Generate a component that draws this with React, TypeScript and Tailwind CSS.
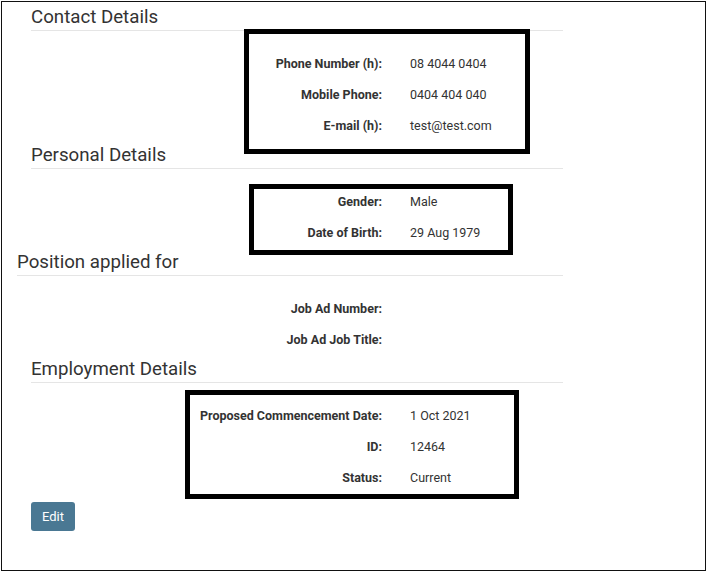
import React from "react";

type Row = { label: string; value?: string };

const contact: Row[] = [
  { label: "Phone Number (h):", value: "08 4044 0404" },
  { label: "Mobile Phone:", value: "0404 404 040" },
  { label: "E-mail (h):", value: "test@test.com" },
];

const personal: Row[] = [
  { label: "Gender:", value: "Male" },
  { label: "Date of Birth:", value: "29 Aug 1979" },
];

const position: Row[] = [
  { label: "Job Ad Number:" },
  { label: "Job Ad Job Title:" },
];

const employment: Row[] = [
  { label: "Proposed Commencement Date:", value: "1 Oct 2021" },
  { label: "ID:", value: "12464" },
  { label: "Status:", value: "Current" },
];

function Heading({ title, indent = true }: { title: string; indent?: boolean }) {
  return (
    <div className={indent ? "ml-[14px] border-b border-[#e5e5e5] pb-[3px]" : "border-b border-[#e5e5e5] pb-[3px]"}>
      <h3 className="text-[18.7px] leading-[20px] font-normal text-[#333]">{title}</h3>
    </div>
  );
}

function Rows({ rows }: { rows: Row[] }) {
  return (
    <dl className="pt-[18px] pb-[3px]">
      {rows.map((r) => (
        <div key={r.label} className="flex h-[31px] items-center text-[12.5px]">
          <dt className="w-[365px] text-right font-bold text-[#333]">{r.label}</dt>
          <dd className="pl-[28px] text-[#333]">{r.value}</dd>
        </div>
      ))}
    </dl>
  );
}

export default function App() {
  return (
    <div className="bg-white" style={{ fontFamily: "Roboto, 'Liberation Sans', sans-serif" }}>
      <div className="relative ml-px mt-px h-[570px] w-[705px] border border-[#111]">
        <div className="ml-[15px] w-[546px] pt-[5px]">
          <Heading title="Contact Details" />
          <Rows rows={contact} />
          <Heading title="Personal Details" />
          <Rows rows={personal} />
          <Heading title="Position applied for" indent={false} />
          <Rows rows={position} />
          <Heading title="Employment Details" />
          <Rows rows={employment} />
          <div className="ml-[14px] pt-[5px]">
            <button className="h-[29px] w-[44px] rounded-[3px] bg-[#4a7893] text-[13px] text-white">
              Edit
            </button>
          </div>
        </div>

        {/* annotation boxes */}
        <div className="pointer-events-none absolute left-[242px] top-[27px] h-[125px] w-[286px] border-[5px] border-black" />
        <div className="pointer-events-none absolute left-[247px] top-[182px] h-[71px] w-[264px] border-[5px] border-black" />
        <div className="pointer-events-none absolute left-[183px] top-[388px] h-[109px] w-[334px] border-[5px] border-black" />
      </div>
    </div>
  );
}
